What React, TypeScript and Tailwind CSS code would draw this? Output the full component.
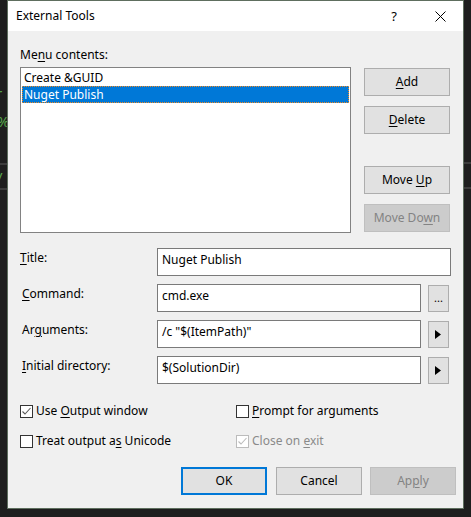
import React from "react";

const font = { fontFamily: '"Noto Sans", "Liberation Sans", sans-serif' };

function Btn({ children, disabled, primary, className = "" }: { children: React.ReactNode; disabled?: boolean; primary?: boolean; className?: string }) {
  const base = "w-[86px] h-[28px] flex items-center justify-center text-[12px] leading-[16px]";
  const look = disabled
    ? "bg-[#cccccc] border border-[#bfbfbf] text-[#838383]"
    : primary
    ? "bg-[#e1e1e1] border-2 border-[#0078d7] text-black"
    : "bg-[#e1e1e1] border border-[#adadad] text-black";
  return <div className={`${base} ${look} ${className}`}>{children}</div>;
}

function Input({ value, width }: { value: string; width: string }) {
  return (
    <div className={`${width} h-[28px] bg-white border border-[#7a7a7a] px-[4px] pt-[3px] text-[12px] leading-[16px] text-black whitespace-nowrap overflow-hidden`}>
      {value}
    </div>
  );
}

function SmallBtn({ children }: { children: React.ReactNode }) {
  return (
    <div className="ml-[7px] mt-[1px] w-[21px] h-[27px] bg-[#e1e1e1] border border-[#adadad] flex items-center justify-center">
      {children}
    </div>
  );
}

function Arrow() {
  return (
    <svg width="6" height="9" viewBox="0 0 6 9" className="ml-[-2px]">
      <polygon points="0,0 6,4.5 0,9" fill="#000" />
    </svg>
  );
}

function Check({ checked, disabled }: { checked?: boolean; disabled?: boolean }) {
  return (
    <div className={`w-[13px] h-[13px] bg-white border ${disabled ? "border-[#bcbcbc]" : "border-[#333333]"} flex items-center justify-center`}>
      {checked && (
        <svg width="11" height="11" viewBox="0 0 11 11">
          <polyline points="1.5,5.5 4,8 9.5,2" fill="none" stroke={disabled ? "#bcbcbc" : "#5a5a5a"} strokeWidth="1.1" />
        </svg>
      )}
    </div>
  );
}

function Row({ label, children, first }: { label: React.ReactNode; children: React.ReactNode; first?: boolean }) {
  return (
    <div className={`flex ${first ? "" : "mt-[8px]"}`}>
      <div className={`w-[137px] ${first ? "" : "pl-[2px]"} pt-[2px] text-[12px] leading-[16px]`}>{label}</div>
      {children}
    </div>
  );
}

function SideStrip({ left }: { left?: boolean }) {
  return (
    <div className="w-[7px] h-[517px] bg-[#1e1e1e] overflow-hidden flex flex-col">
      {left ? (
        <>
          <div className="mt-[84px] h-[18px] text-[15px] leading-[18px] text-[#57a64a] whitespace-nowrap ml-[-4px]">r</div>
          <div className="mt-[10px] h-[18px] text-[15px] leading-[18px] text-[#57a64a] whitespace-nowrap ml-[-3px]">%</div>
          <div className="mt-[33px] h-[2px] bg-[#3c3c3c]" />
          <div className="mt-[3px] h-[18px] text-[15px] leading-[18px] text-[#57a64a] whitespace-nowrap ml-[-3px]">/</div>
          <div className="mt-[2px] h-[2px] bg-[#3c3c3c]" />
        </>
      ) : (
        <>
          <div className="mt-[162px] h-[2px] bg-[#3c3c3c]" />
          <div className="mt-[23px] h-[2px] bg-[#3c3c3c]" />
        </>
      )}
    </div>
  );
}

export default function App() {
  return (
    <div className="w-[471px] h-[517px] bg-[#1e1e1e] flex overflow-hidden text-black" style={font}>
      <SideStrip left />
      <div className="w-[457px] h-[509px] border border-[#5e6e5e] flex flex-col">
        <div className="h-[30px] bg-white flex items-center pl-[8px] text-[12px] leading-[16px]">
          <span className="mt-[-1px]">External Tools</span>
          <span className="ml-auto mr-[38px] text-[13px] mt-[-1px]">?</span>
          <svg width="11" height="11" viewBox="0 0 11 11" className="mr-[17px]">
            <path d="M0.5 0.5 L10.5 10.5 M10.5 0.5 L0.5 10.5" stroke="#000" strokeWidth="1" />
          </svg>
        </div>
        <div className="flex-1 bg-[#f0f0f0] flex flex-col pl-[12px] text-[12px] leading-[16px]">
          <div className="mt-[16px] h-[16px]">
            Me<span className="underline underline-offset-2">n</span>u contents:
          </div>
          <div className="mt-[4px] flex">
            <div className="w-[331px] h-[166px] bg-white border border-[#828282] p-[1px] pt-[1px] flex flex-col">
              <div className="h-[17px] px-[2px] leading-[17px]">Create &amp;GUID</div>
              <div className="h-[17px] px-[1px] leading-[15px] bg-[#0078d7] text-white border border-dotted border-[#f08a24]">Nuget Publish</div>
            </div>
            <div className="ml-[13px] pt-[1px] flex flex-col">
              <Btn><span><span className="underline underline-offset-2">A</span>dd</span></Btn>
              <Btn className="mt-[10px]"><span><span className="underline underline-offset-2">D</span>elete</span></Btn>
              <Btn className="mt-[32px]"><span>Move <span className="underline underline-offset-2">U</span>p</span></Btn>
              <Btn disabled className="mt-[10px]"><span>Move Do<span className="underline underline-offset-2">w</span>n</span></Btn>
            </div>
          </div>
          <div className="mt-[15px] flex flex-col">
            <Row first label={<span><span className="underline underline-offset-2">T</span>itle:</span>}>
              <Input value="Nuget Publish" width="w-[294px]" />
            </Row>
            <Row label={<span><span className="underline underline-offset-2">C</span>ommand:</span>}>
              <Input value="cmd.exe" width="w-[264px]" />
              <SmallBtn><span className="text-[11px] leading-[11px] mt-[-2px]">...</span></SmallBtn>
            </Row>
            <Row label={<span>Ar<span className="underline underline-offset-2">g</span>uments:</span>}>
              <Input value={'/c "$(ItemPath)"'} width="w-[264px]" />
              <SmallBtn><Arrow /></SmallBtn>
            </Row>
            <Row label={<span><span className="underline underline-offset-2">I</span>nitial directory:</span>}>
              <Input value="$(SolutionDir)" width="w-[264px]" />
              <SmallBtn><Arrow /></SmallBtn>
            </Row>
          </div>
          <div className="mt-[19px] grid grid-cols-[216px_1fr] gap-y-[14px]">
            <div className="flex items-center h-[16px]">
              <Check checked />
              <span className="ml-[3px]">Use <span className="underline underline-offset-2">O</span>utput window</span>
            </div>
            <div className="flex items-center h-[16px]">
              <Check />
              <span className="ml-[3px]"><span className="underline underline-offset-2">P</span>rompt for arguments</span>
            </div>
            <div className="flex items-center h-[16px]">
              <Check />
              <span className="ml-[3px]">Treat output a<span className="underline underline-offset-2">s</span> Unicode</span>
            </div>
            <div className="flex items-center h-[16px] text-[#8a8a8a]">
              <Check checked disabled />
              <span className="ml-[3px]">Close on <span className="underline underline-offset-2">e</span>xit</span>
            </div>
          </div>
          <div className="mt-[18px] flex pl-[161px]">
            <Btn primary>OK</Btn>
            <Btn className="ml-[9px]">Cancel</Btn>
            <Btn disabled className="ml-[8px]"><span>Ap<span className="underline underline-offset-2">p</span>ly</span></Btn>
          </div>
        </div>
      </div>
      <SideStrip />
    </div>
  );
}
